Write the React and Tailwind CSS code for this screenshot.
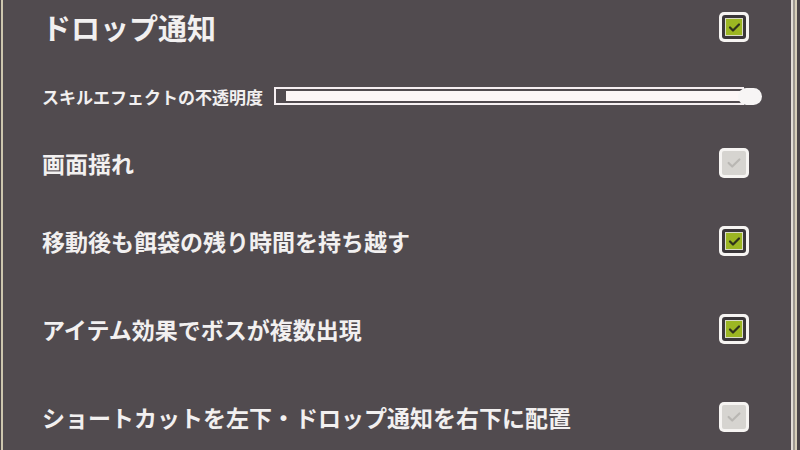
import React from 'react'

// 設定パネル(トグル行 + 不透明度スライダー)

const FONT = { fontFamily: '"Noto Sans CJK JP", "Noto Sans", sans-serif' }

function Check({ on = true, disabled = false }) {
  if (disabled) {
    return (
      <div className="w-[30px] h-[30px] rounded-[5px] bg-[#f6f4f2] p-[3px] shrink-0">
        <div className="w-full h-full rounded-[2px] bg-[#d6d4d0] flex items-center justify-center">
          <svg viewBox="0 0 20 20" className="w-[18px] h-[18px]">
            <polyline points="4,10 8,14 16,6" fill="none" stroke="#b9b7b3" strokeWidth="2.4" strokeLinecap="round" strokeLinejoin="round" />
          </svg>
        </div>
      </div>
    )
  }
  return (
    <div className="w-[30px] h-[30px] rounded-[5px] bg-[#f6f4f2] p-[3px] shrink-0">
      <div className="w-full h-full rounded-[3px] bg-[#3b373a] p-[3px]">
        <div className="w-full h-full border border-[#d9dcc4] bg-[#9cb622] flex items-center justify-center">
          {on && (
            <svg viewBox="0 0 20 20" className="w-[15px] h-[15px]">
              <polyline points="4,10 8,14 16,6" fill="none" stroke="#2f311c" strokeWidth="3" strokeLinecap="round" strokeLinejoin="round" />
            </svg>
          )}
        </div>
      </div>
    </div>
  )
}

function Row({ h, label, size = 'text-[23px]', children }) {
  return (
    <div className={`flex items-center justify-between shrink-0 ${h}`}>
      <span className={`${size} font-bold text-[#f2f0f0] leading-none whitespace-nowrap`}>{label}</span>
      {children}
    </div>
  )
}

export default function App() {
  return (
    <div className="w-[800px] h-[450px] overflow-hidden flex bg-[#514b4f]" style={FONT}>
      <div className="w-px bg-[#4a4548] shrink-0" />
      <div className="w-[2px] bg-[#cdc6ae] shrink-0" />

      <div className="flex-1 min-w-0 flex flex-col pl-[39px] pr-[42px]">
        <Row h="h-[54px]" label="ドロップ通知" size="text-[29px]">
          <Check />
        </Row>

        <div className="h-[84px] flex items-center shrink-0">
          <span className="text-[17px] font-bold text-[#f2f0f0] leading-none whitespace-nowrap">
            スキルエフェクトの不透明度
          </span>
          <div className="relative ml-[11px] w-[488px] h-[18px] shrink-0">
            <div className="w-[470px] h-[18px] border-l-2 border-t-2 border-b-2 border-[#f5eff1] pl-[10px] py-[2px]">
              <div className="h-full bg-[#fcf6f6]" />
            </div>
            <div className="absolute right-0 top-[1px] w-[24px] h-[17px] rounded-full bg-[#f7f5f5]" />
          </div>
        </div>

        <Row h="h-[50px]" label="画面揺れ">
          <Check disabled />
        </Row>
        <Row h="h-[106px]" label="移動後も餌袋の残り時間を持ち越す">
          <Check />
        </Row>
        <Row h="h-[70px]" label="アイテム効果でボスが複数出現">
          <Check />
        </Row>
        <Row h="h-[106px]" label="ショートカットを左下・ドロップ通知を右下に配置">
          <Check disabled />
        </Row>
      </div>

      <div className="w-[2px] bg-[#e2ded6] shrink-0" />
      <div className="w-[2px] bg-[#9e9a92] shrink-0" />
      <div className="w-[2px] bg-[#d6cfb8] shrink-0" />
      <div className="w-[3px] bg-[#4a4548] shrink-0" />
    </div>
  )
}
